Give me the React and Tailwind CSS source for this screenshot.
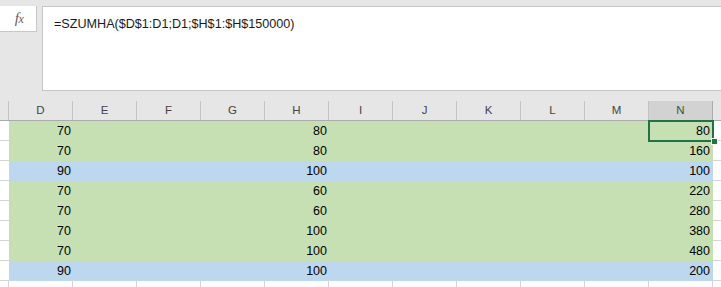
import React from "react";

const cols = ["D", "E", "F", "G", "H", "I", "J", "K", "L", "M", "N"];
const rows = [
  { d: 70, h: 80, n: 80, c: "g" },
  { d: 70, h: 80, n: 160, c: "g" },
  { d: 90, h: 100, n: 100, c: "b" },
  { d: 70, h: 60, n: 220, c: "g" },
  { d: 70, h: 60, n: 280, c: "g" },
  { d: 70, h: 100, n: 380, c: "g" },
  { d: 70, h: 100, n: 480, c: "g" },
  { d: 90, h: 100, n: 200, c: "b" },
];

export default function App() {
  return (
    <div className="w-[721px] h-[287px] bg-[#e6e6e6] overflow-hidden relative font-['Liberation_Sans',Arial,sans-serif] text-black">
      {/* formula bar */}
      <div className="flex items-start pt-[6px] h-[101px]">
        <div className="w-[37px] h-[26px] bg-white border-r border-b border-[#c8c8c8] flex items-center justify-center">
          <span className="font-['Liberation_Serif',serif] italic text-[15px] leading-[15px] text-[#606060] tracking-[-0.5px] pl-[2px]">
            f<span className="text-[12px]">x</span>
          </span>
        </div>
        <div className="ml-[5px] flex-1 h-[85px] bg-white border-t border-l border-b border-[#c6c6c6] pl-[11px] pt-[4px]">
          <span className="text-[12.6px] leading-[16px] text-[#1a1a1a]">
            =SZUMHA($D$1:D1;D1;$H$1:$H$150000)
          </span>
        </div>
      </div>

      {/* column headers */}
      <div className="flex h-[20px] border-b border-[#ababab]">
        <div className="w-[9px] border-r border-[#c4c4c4]" />
        {cols.map((c) => (
          <div
            key={c}
            className={
              c === "N"
                ? "w-[64px] border-r border-[#ababab] bg-[#d2d2d2] flex items-center justify-center text-[11.5px] text-[#2a5a3e]"
                : "w-[64px] border-r border-[#c4c4c4] flex items-center justify-center text-[11.5px] text-[#444]"
            }
          >
            {c}
          </div>
        ))}
        <div className="flex-1" />
      </div>

      {/* data rows */}
      {rows.map((r, i) => (
        <div key={i} className="flex h-[20px]">
          <div className="w-[9px] bg-white border-b border-[#d4d4d4]" />
          <div
            className={
              r.c === "g"
                ? "w-[704px] bg-[#c6e0b4] flex items-center text-[12.5px]"
                : "w-[704px] bg-[#bdd7ee] flex items-center text-[12.5px]"
            }
          >
            <div className="w-[64px] text-right pr-[2px]">{r.d}</div>
            <div className="w-[192px]" />
            <div className="w-[64px] text-right pr-[2px]">{r.h}</div>
            <div className="w-[320px]" />
            <div className="w-[64px] text-right pr-[3px]">{r.n}</div>
          </div>
          <div className="flex-1 bg-white border-b border-[#d4d4d4]" />
        </div>
      ))}

      {/* bottom partial row */}
      <div className="flex h-[10px] bg-white">
        <div className="w-[9px] border-r border-[#d4d4d4]" />
        {cols.map((c) => (
          <div key={c} className="w-[64px] border-r border-[#d4d4d4]" />
        ))}
        <div className="flex-1" />
      </div>

      {/* selection */}
      <div className="absolute left-[648px] top-[120px] w-[66px] h-[22px] border-2 border-[#217346]" />
      <div className="absolute left-[711px] top-[138px] w-[5px] h-[5px] bg-[#217346] border border-white box-content" />
    </div>
  );
}
